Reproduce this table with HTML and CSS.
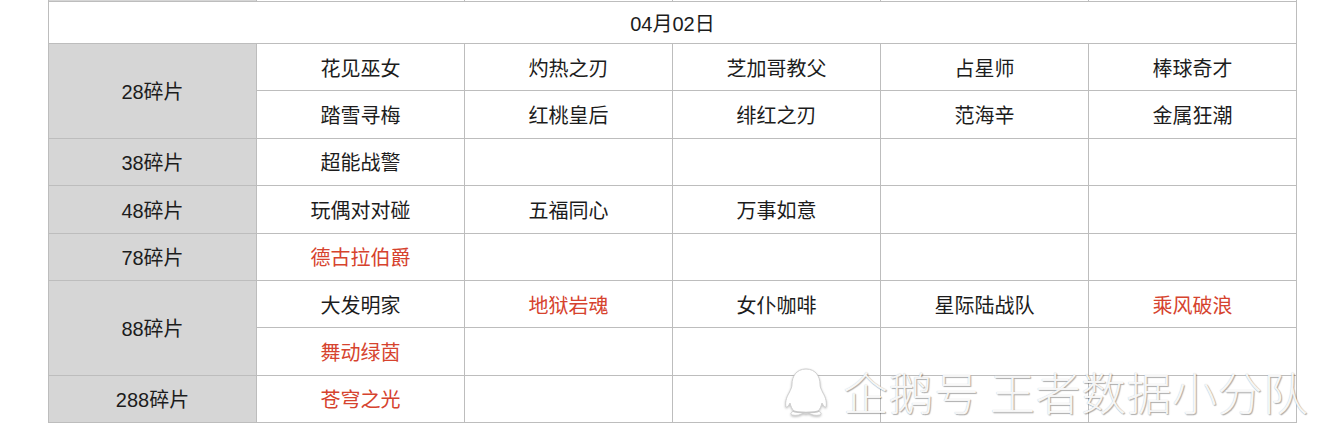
FILE: index.html
```html
<!DOCTYPE html>
<html lang="zh">
<head>
<meta charset="utf-8">
<link rel="stylesheet" href="styles.css">
</head>
<body>
<div class="page">
  <table class="grid">
    <colgroup>
      <col class="c"><col class="c"><col class="c"><col class="c"><col class="c"><col class="c">
    </colgroup>
    <tr class="stub"><td class="label"></td><td></td><td></td><td></td><td></td><td></td></tr>
    <tr class="head"><td colspan="6">04月02日</td></tr>
    <tr><td class="label" rowspan="2">28碎片</td><td>花见巫女</td><td>灼热之刃</td><td>芝加哥教父</td><td>占星师</td><td>棒球奇才</td></tr>
    <tr><td>踏雪寻梅</td><td>红桃皇后</td><td>绯红之刃</td><td>范海辛</td><td>金属狂潮</td></tr>
    <tr><td class="label">38碎片</td><td>超能战警</td><td></td><td></td><td></td><td></td></tr>
    <tr><td class="label">48碎片</td><td>玩偶对对碰</td><td>五福同心</td><td>万事如意</td><td></td><td></td></tr>
    <tr><td class="label">78碎片</td><td class="red">德古拉伯爵</td><td></td><td></td><td></td><td></td></tr>
    <tr><td class="label" rowspan="2">88碎片</td><td>大发明家</td><td class="red">地狱岩魂</td><td>女仆咖啡</td><td>星际陆战队</td><td class="red">乘风破浪</td></tr>
    <tr><td class="red">舞动绿茵</td><td></td><td></td><td></td><td></td></tr>
    <tr><td class="label">288碎片</td><td class="red">苍穹之光</td><td></td><td></td><td></td><td></td></tr>
  </table>
  <div class="watermark">
    <svg class="penguin" width="46" height="50" viewBox="0 0 46 50">
      <path d="M23 2 C13 2 9 10 9 17 C9 20 8 22 6 26 C3 31 2 36 3 40 C4 41 6 38 7 36 C8 40 9 42 11 44 C8 45 7 47 9 48 C13 49 18 48 20 46 C22 47 24 47 26 46 C28 48 33 49 37 48 C39 47 38 45 35 44 C37 42 38 40 39 36 C40 38 42 41 43 40 C44 36 43 31 40 26 C38 22 37 20 37 17 C37 10 33 2 23 2 Z" fill="#ffffff" stroke="#cfcfcf" stroke-width="1"/>
      <path d="M10 44 C14 46 32 46 36 44" fill="none" stroke="#c8c8c8" stroke-width="1.5"/>
    </svg>
    <span class="wm-text">企鹅号 王者数据小分队</span>
  </div>
</div>
</body>
</html>
```

FILE: styles.css
```css
html, body {
  margin: 0;
  padding: 0;
  background: #ffffff;
}

.page {
  position: relative;
  width: 1334px;
  height: 441px;
  overflow: hidden;
  padding-left: 48px;
  box-sizing: border-box;
}

.grid {
  border-collapse: collapse;
  table-layout: fixed;
  width: 1249px;
  margin-top: -19px;
  font-family: "Liberation Sans", "Noto Sans CJK SC", sans-serif;
  font-size: 20px;
  color: #1c1c1c;
}

.grid col.c {
  width: 208px;
}

.grid td {
  border: 1px solid #bdbdbd;
  text-align: center;
  vertical-align: middle;
  padding: 0;
  height: 47.4px;
  box-sizing: border-box;
}

.grid tr.stub td {
  height: 20px;
}

.grid tr.head td {
  height: 42px;
}

.grid td.label {
  background: #d6d6d6;
}

.grid td.red {
  color: #d6432e;
}

.watermark {
  position: absolute;
  left: 783px;
  top: 364px;
  display: flex;
  align-items: center;
  gap: 14px;
}

.penguin {
  filter: drop-shadow(0 1px 1px rgba(0, 0, 0, 0.25));
}

.wm-text {
  font-family: "Noto Sans CJK SC", sans-serif;
  font-weight: 300;
  font-size: 45px;
  letter-spacing: 0.5px;
  line-height: 56px;
  color: rgba(255, 255, 255, 0.92);
  text-shadow: 1px 1px 1px rgba(0, 0, 0, 0.3), 0 0 1px rgba(0, 0, 0, 0.25);
  white-space: nowrap;
}
```
